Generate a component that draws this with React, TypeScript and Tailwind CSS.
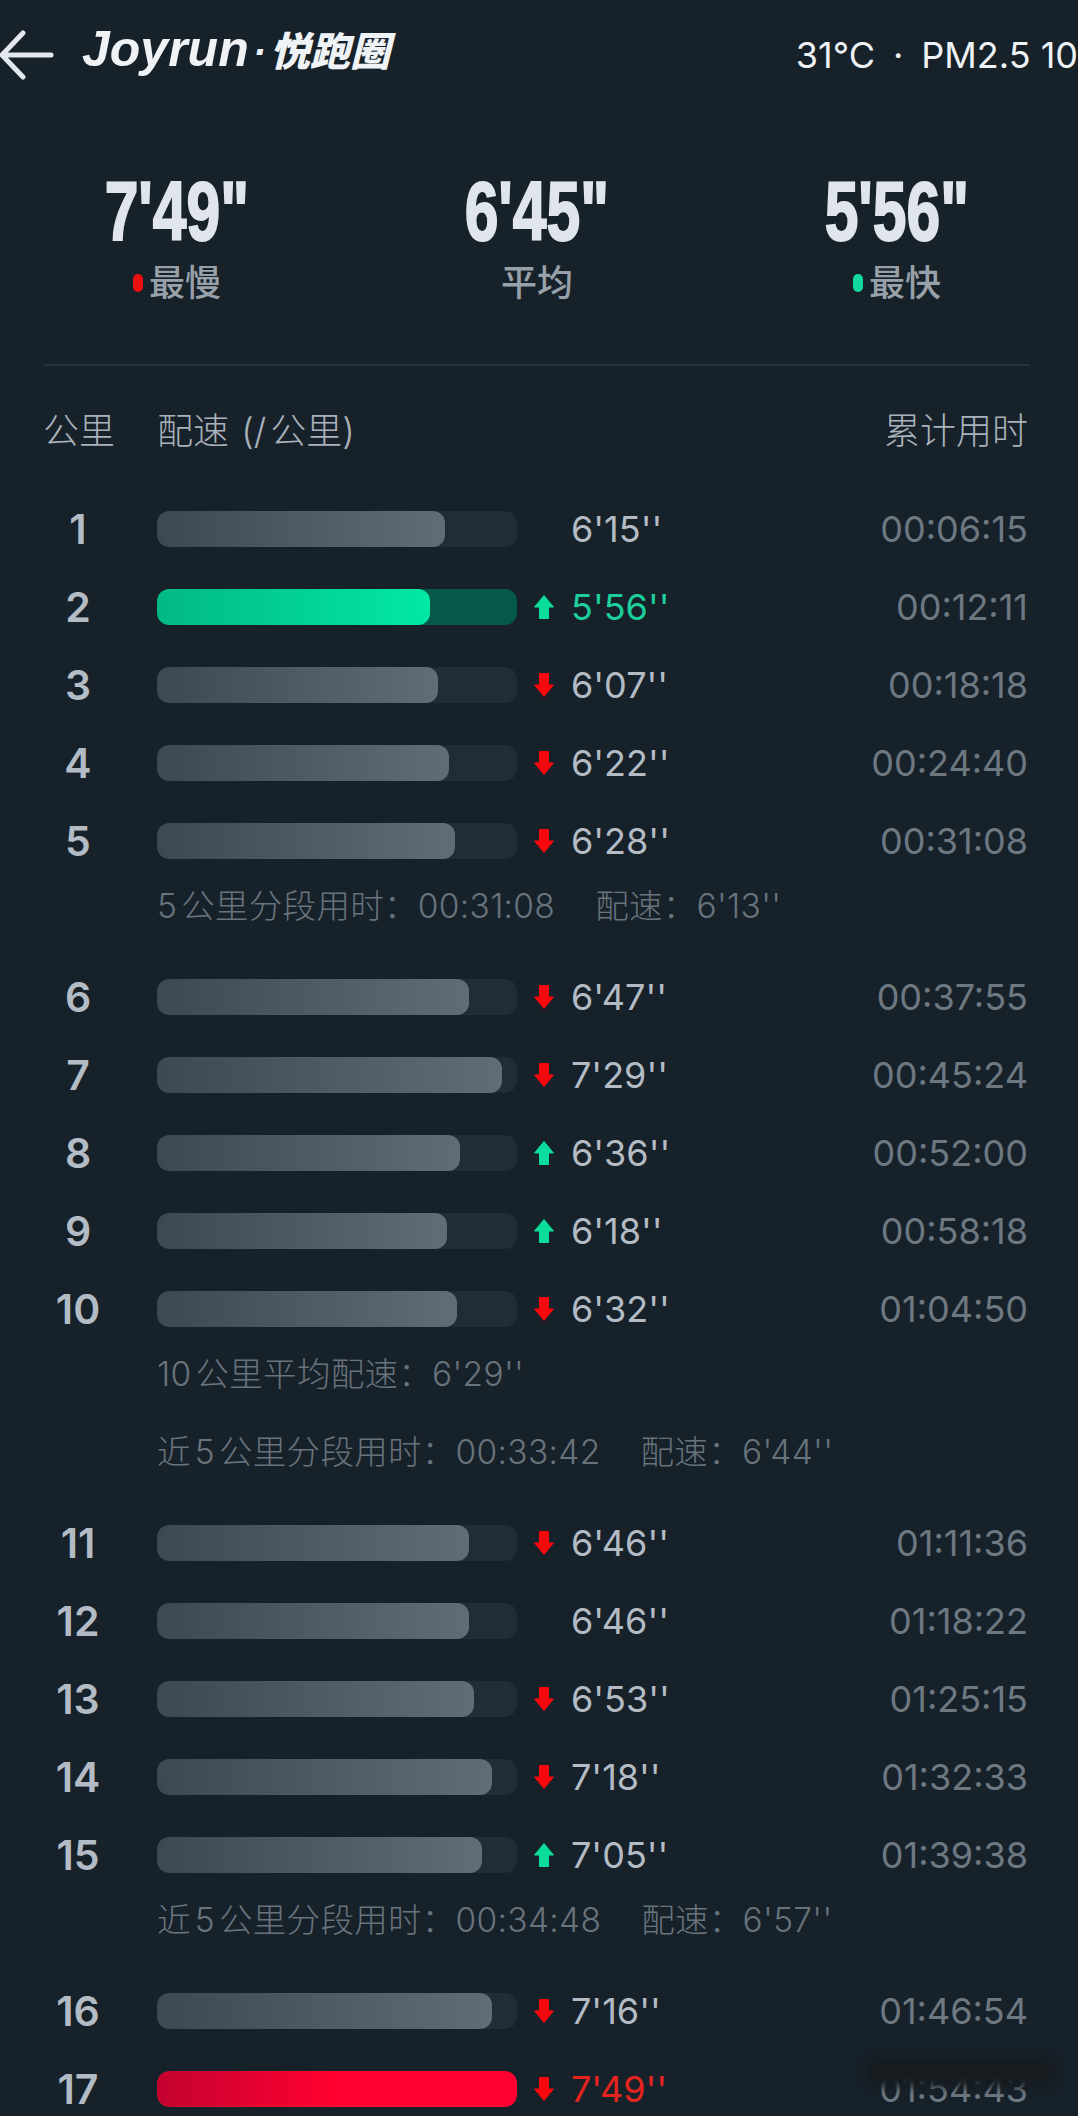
import React from "react";

type Split = {
  km: number;
  fill: number;
  trend?: "up" | "down";
  pace: string;
  total: string;
  tone?: "green" | "red";
  notes?: React.ReactNode[];
};

const Gap: React.FC = () => <span className="inline-block w-[40px]" />;
const Thin: React.FC = () => <span className="inline-block w-[4px]" />;

const splits: Split[] = [
  { km: 1, fill: 288, pace: "6'15''", total: "00:06:15" },
  { km: 2, fill: 273, trend: "up", pace: "5'56''", total: "00:12:11", tone: "green" },
  { km: 3, fill: 281, trend: "down", pace: "6'07''", total: "00:18:18" },
  { km: 4, fill: 292, trend: "down", pace: "6'22''", total: "00:24:40" },
  {
    km: 5,
    fill: 298,
    trend: "down",
    pace: "6'28''",
    total: "00:31:08",
    notes: [
      <>
        5<Thin />公里分段用时：00:31:08<Gap />配速：6'13''
      </>,
    ],
  },
  { km: 6, fill: 312, trend: "down", pace: "6'47''", total: "00:37:55" },
  { km: 7, fill: 345, trend: "down", pace: "7'29''", total: "00:45:24" },
  { km: 8, fill: 303, trend: "up", pace: "6'36''", total: "00:52:00" },
  { km: 9, fill: 290, trend: "up", pace: "6'18''", total: "00:58:18" },
  {
    km: 10,
    fill: 300,
    trend: "down",
    pace: "6'32''",
    total: "01:04:50",
    notes: [
      <>
        10<Thin />公里平均配速：6'29''
      </>,
      <>
        近<Thin />5<Thin />公里分段用时：00:33:42<Gap />配速：6'44''
      </>,
    ],
  },
  { km: 11, fill: 312, trend: "down", pace: "6'46''", total: "01:11:36" },
  { km: 12, fill: 312, pace: "6'46''", total: "01:18:22" },
  { km: 13, fill: 317, trend: "down", pace: "6'53''", total: "01:25:15" },
  { km: 14, fill: 335, trend: "down", pace: "7'18''", total: "01:32:33" },
  {
    km: 15,
    fill: 325,
    trend: "up",
    pace: "7'05''",
    total: "01:39:38",
    notes: [
      <>
        近<Thin />5<Thin />公里分段用时：00:34:48<Gap />配速：6'57''
      </>,
    ],
  },
  { km: 16, fill: 335, trend: "down", pace: "7'16''", total: "01:46:54" },
  { km: 17, fill: 360, trend: "down", pace: "7'49''", total: "01:54:43", tone: "red" },
];

const TrendArrow: React.FC<{ trend?: "up" | "down" }> = ({ trend }) => {
  if (!trend) return null;
  if (trend === "up") {
    return (
      <svg width="20" height="24" viewBox="0 0 20 24">
        <path
          d="M10 0.5 L19.5 12 H14.5 V23.5 H5.5 V12 H0.5 Z"
          fill="#0bdc9b"
          stroke="#0bdc9b"
          strokeWidth="1"
          strokeLinejoin="round"
        />
      </svg>
    );
  }
  return (
    <svg width="20" height="24" viewBox="0 0 20 24">
      <path
        d="M10 23.5 L19.5 12 H14.5 V0.5 H5.5 V12 H0.5 Z"
        fill="#f5080e"
        stroke="#f5080e"
        strokeWidth="1"
        strokeLinejoin="round"
      />
    </svg>
  );
};

const SplitRow: React.FC<{ split: Split }> = ({ split }) => {
  const { km, fill, trend, pace, total, tone, notes } = split;
  return (
    <>
      <div className="flex h-[78px] items-center pl-[44px] pr-[50px]">
        <div className="w-[68px] text-center text-[41px] leading-none font-semibold text-[#b3bcc5]">{km}</div>
        <div
          className={`ml-[45px] h-[36px] w-[360px] overflow-hidden rounded-[12px] ${
            tone === "green" ? "bg-[#04594a]" : "bg-[#222c34]"
          }`}
        >
          <div
            className={`h-full rounded-[12px] bg-gradient-to-r ${
              tone === "green"
                ? "from-[#02b884] to-[#02e8a4]"
                : tone === "red"
                  ? "from-[#c4022f] via-[#ff0030] to-[#ff0030]"
                  : "from-[#3e4851] to-[#626c75]"
            }`}
            style={{ width: fill }}
          />
        </div>
        <div className="flex w-[54px] justify-center">
          <TrendArrow trend={trend} />
        </div>
        <div
          className={`text-[36px] leading-none ${
            tone === "green" ? "text-[#1dcf9c]" : tone === "red" ? "text-[#e5231f]" : "text-[#b3bcc4]"
          }`}
        >
          {pace}
        </div>
        <div className="ml-auto text-[36px] leading-none text-[#6d7881]">{total}</div>
      </div>
      {notes?.map((note, index) => (
        <div
          key={index}
          className="h-[78px] pb-[26px] pl-[157px] text-[33.5px] leading-[52px] font-light tracking-[0.3px] text-[#68737c]"
        >
          {note}
        </div>
      ))}
    </>
  );
};

const Stat: React.FC<{ value: string; label: string; dot?: string }> = ({ value, label, dot }) => (
  <div className="flex w-[240px] flex-col items-center">
    <div className="scale-x-[0.73] font-['Liberation_Sans',sans-serif] text-[83px] leading-[83px] font-bold text-[#e0e5ec] [-webkit-text-stroke:2px_#e0e5ec]">
      {value}
    </div>
    <div className="mt-[10px] flex items-center justify-center gap-[6px] text-[36px] leading-[40px] font-medium text-[#98a1a9]">
      {dot && <span className={`h-[18px] w-[10px] rounded-[5px] ${dot}`} />}
      {label}
    </div>
  </div>
);

const App: React.FC = () => {
  return (
    <div className="relative h-[2116px] w-[1078px] overflow-hidden bg-[#17212a] font-['Inter','Noto_Sans_CJK_SC',sans-serif]">
      {/* top bar */}
      <header className="flex h-[110px] items-center">
        <svg width="54" height="50" viewBox="0 0 54 50" className="shrink-0">
          <path
            d="M51 25 H3 M23 3 L2 25 L23 47"
            fill="none"
            stroke="#e4e8ee"
            strokeWidth="5"
            strokeLinecap="round"
            strokeLinejoin="round"
          />
        </svg>
        <div className="mb-[12px] ml-[28px] flex items-baseline font-['Liberation_Sans','Noto_Sans_CJK_SC',sans-serif] text-[50px] leading-none font-bold text-[#f0f3f6] italic">
          Joyrun
          <span className="mx-[4px] text-[40px]">·</span>
          <span className="text-[40px] font-black">悦跑圈</span>
        </div>
        <div className="ml-auto flex items-center text-[36px] leading-none font-normal whitespace-nowrap text-[#eef2f5]">
          <span>31°C</span>
          <span className="mx-[18px]">·</span>
          <span>PM2.5 10</span>
        </div>
      </header>

      {/* summary */}
      <section className="mt-[60px] flex w-[1017px] justify-between pl-[57px]">
        <Stat value={`7'49"`} label="最慢" dot="bg-[#e8100f]" />
        <Stat value={`6'45"`} label="平均" />
        <Stat value={`5'56"`} label="最快" dot="bg-[#12d9a0]" />
      </section>

      <div className="mx-[44px] mt-[61px] w-[986px] border-t-2 border-[#27323a]" />

      {/* table header */}
      <div className="mt-[45px] flex pl-[43px] pr-[50px] text-[36px] leading-[40px] font-light text-[#a9b2ba]">
        <span className="w-[114px]">公里</span>
        <span>
          配速 <span className="ml-[2px]">(/</span>
          <span className="ml-[4px]">公里)</span>
        </span>
        <span className="ml-auto">累计用时</span>
      </div>

      <div className="mt-[39px]">
        {splits.map((split) => (
          <SplitRow key={split.km} split={split} />
        ))}
      </div>

      {/* smudged watermark over the last row */}
      <div className="absolute top-[2058px] left-[866px] h-[29px] w-[190px] rounded-[8px] bg-[#161b1f] blur-[5px]" />
    </div>
  );
};

export default App;
